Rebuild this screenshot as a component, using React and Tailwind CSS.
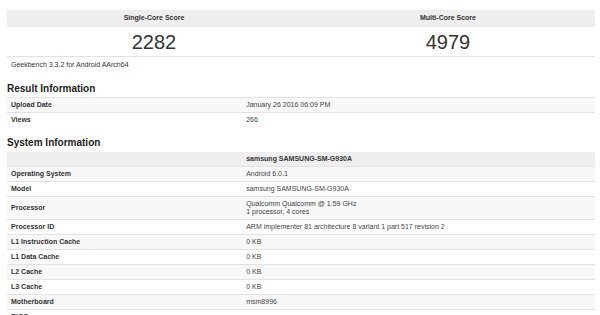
import React from "react";

const resultRows = [
  ["Upload Date", "January 26 2016 06:09 PM"],
  ["Views", "266"],
];

const systemRows = [
  ["Operating System", ["Android 6.0.1"]],
  ["Model", ["samsung SAMSUNG-SM-G930A"]],
  ["Processor", ["Qualcomm Qualcomm @ 1.59 GHz", "1 processor, 4 cores"]],
  ["Processor ID", ["ARM implementer 81 architecture 8 variant 1 part 517 revision 2"]],
  ["L1 Instruction Cache", ["0 KB"]],
  ["L1 Data Cache", ["0 KB"]],
  ["L2 Cache", ["0 KB"]],
  ["L3 Cache", ["0 KB"]],
  ["Motherboard", ["msm8996"]],
  ["BIOS", [""]],
];

function Row({ label, lines, striped }) {
  return (
    <div
      className={`flex items-center border-t border-[#e2e2e2] py-[3px] ${
        striped ? "bg-[#f8f8f8]" : "bg-white"
      }`}
    >
      <div className="w-[40%] shrink-0 pl-[4px] font-bold text-[#333]">{label}</div>
      <div className="flex-1 pl-[4px] text-[#444]">
        {lines.map((l, i) => (
          <div key={i} className="h-[8px]">
            {l}
          </div>
        ))}
      </div>
    </div>
  );
}

export default function App() {
  return (
    <div className="w-[600px] h-[315px] overflow-hidden bg-white font-['Liberation_Sans',Arial,sans-serif] text-[#333]">
      <div className="pl-[7px] pr-[5px] pt-[10px]">
        <div className="grid grid-cols-2">
          <div className="h-[17px] bg-[#eeeeee] flex items-center justify-center text-[7px] font-bold">
            Single-Core Score
          </div>
          <div className="h-[17px] bg-[#eeeeee] flex items-center justify-center text-[7px] font-bold">
            Multi-Core Score
          </div>
          <div className="h-[30px] border-b border-[#e2e2e2] flex items-center justify-center text-[20px] leading-none">
            2282
          </div>
          <div className="h-[30px] border-b border-[#e2e2e2] flex items-center justify-center text-[20px] leading-none">
            4979
          </div>
        </div>
        <div className="mt-[4px] pl-[4px] text-[7px] leading-[8px]">
          Geekbench 3.3.2 for Android AArch64
        </div>

        <div className="mt-[14px] text-[10px] leading-[12px] font-bold text-[#222]">
          Result Information
        </div>
        <div className="mt-[2px] text-[7px] leading-[8px]">
          {resultRows.map(([l, v], i) => (
            <Row key={l} label={l} lines={[v]} striped={i % 2 === 0} />
          ))}
        </div>

        <div className="mt-[10px] text-[10px] leading-[12px] font-bold text-[#222]">
          System Information
        </div>
        <div className="mt-[3px] text-[7px] leading-[8px]">
          <div className="flex items-center bg-[#eeeeee] py-[3px]">
            <div className="w-[40%] shrink-0" />
            <div className="flex-1 pl-[4px] h-[8px] font-bold">samsung SAMSUNG-SM-G930A</div>
          </div>
          {systemRows.map(([l, v], i) => (
            <Row key={l} label={l} lines={v} striped={i % 2 === 0} />
          ))}
        </div>
      </div>
    </div>
  );
}
